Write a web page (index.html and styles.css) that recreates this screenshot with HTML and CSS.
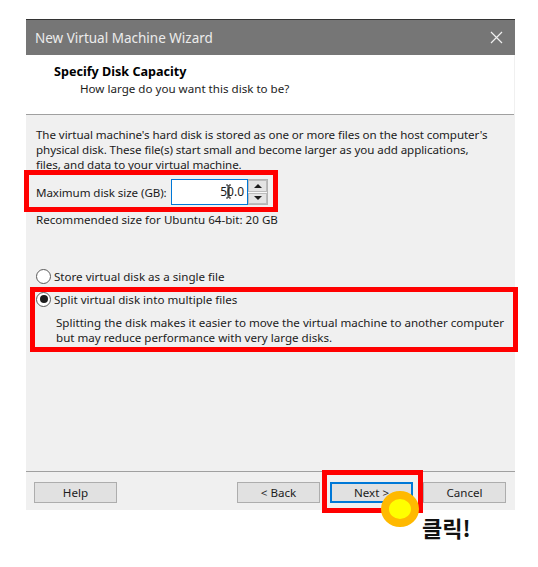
FILE: index.html
```html
<!DOCTYPE html>
<html lang="en">
<head>
    <meta charset="UTF-8">
    <title>New Virtual Machine Wizard</title>
    <link rel="stylesheet" href="styles.css">
</head>
<body>
    <div class="window">
        <div class="titlebar">
            <span>New Virtual Machine Wizard</span>
            <svg class="close" width="13" height="13" viewBox="0 0 13 13">
                <path d="M1 1L12 12M12 1L1 12" stroke="#f0f0f0" stroke-width="1.2" fill="none"/>
            </svg>
        </div>
        <div class="header">
            <h1>Specify Disk Capacity</h1>
            <p>How large do you want this disk to be?</p>
        </div>
        <div class="content">
            <p class="intro">The virtual machine's hard disk is stored as one or more files on the host computer's<br>physical disk. These file(s) start small and become larger as you add applications,<br>files, and data to your virtual machine.</p>
            <div class="size-row">
                <label>Maximum disk size (GB):</label>
                <div class="spinner">
                    <div class="size-input">50.0</div>
                    <div class="arrows">
                        <div class="arrow"><i class="up"></i></div>
                        <div class="arrow"><i class="down"></i></div>
                    </div>
                </div>
            </div>
            <p class="recommend">Recommended size for Ubuntu 64-bit: 20 GB</p>
            <div class="radio-row first"><span class="radio"></span>Store virtual disk as a single file</div>
            <div class="radio-row"><span class="radio checked"></span>Split virtual disk into multiple files</div>
            <p class="note">Splitting the disk makes it easier to move the virtual machine to another computer<br>but may reduce performance with very large disks.</p>
        </div>
        <div class="footer">
            <button class="help">Help</button>
            <button class="back">&lt; Back</button>
            <button class="next">Next &gt;</button>
            <button class="cancel">Cancel</button>
        </div>
    </div>

    <!-- annotations drawn over the screenshot -->
    <div class="mark mark-size"></div>
    <div class="mark mark-split"></div>
    <div class="mark mark-next"></div>
    <svg class="ibeam" width="7" height="15" viewBox="0 0 7 15">
        <path d="M1 1H3V14H1M6 1H4V14H6" stroke="#222" stroke-width="1" fill="none"/>
    </svg>
    <div class="click-dot"></div>
    <div class="click-label">클릭!</div>
</body>
</html>
```

FILE: styles.css
```css
body {
    font-family: "Noto Sans", "Noto Sans CJK KR", sans-serif;
    font-size: 11.6px;
    color: #1c1c1c;
    background-color: #ffffff;
    margin: 0;
    padding: 19px 0 0 26px;
    height: 567px;
    box-sizing: border-box;
    overflow: hidden;
}
.window {
    width: 489px;
    height: 491px;
    display: flex;
    flex-direction: column;
    background-color: #f0f0f0;
}
.titlebar {
    height: 36px;
    background-color: #767676;
    color: #ececec;
    font-size: 13.5px;
    padding: 0 12px 0 9px;
    display: flex;
    align-items: center;
    justify-content: space-between;
    flex-shrink: 0;
    border-top: 1px solid #333333;
    box-sizing: border-box;
}
.header {
    height: 59px;
    background-color: #ffffff;
    border-bottom: 1px solid #a0a0a0;
    padding-left: 28px;
    flex-shrink: 0;
    margin-right: 1px;
}
.header h1 {
    font-size: 12.6px;
    font-weight: 700;
    color: #000000;
    margin: 0;
    padding-top: 8px;
    line-height: 17px;
}
.header p {
    margin: 0 0 0 26px;
    line-height: 17px;
}
.content {
    flex: 1;
    padding: 12px 10px 0 10px;
}
.content p {
    margin: 0;
}
.intro {
    line-height: 15px;
    height: 45px;
    letter-spacing: -0.08px;
    white-space: nowrap;
}
.size-row {
    display: flex;
    align-items: center;
    margin-top: 7px;
    height: 26px;
}
.size-row label {
    width: 135px;
    white-space: nowrap;
    letter-spacing: -0.08px;
}
.spinner {
    display: flex;
    height: 26px;
}
.size-input {
    width: 72px;
    background-color: #ffffff;
    border: 1px solid #0078d7;
    text-align: right;
    padding-right: 3px;
    line-height: 24px;
    font-size: 12px;
}
.arrows {
    width: 20px;
    display: flex;
    flex-direction: column;
    border: 1px solid #b4b4b4;
    border-left: none;
    box-sizing: border-box;
    gap: 1px;
    background-color: #f8f8f8;
}
.arrow {
    flex: 1;
    background-color: #e4e4e4;
    border: 1px solid #bcbcbc;
    display: flex;
    align-items: center;
    justify-content: center;
}
.arrow i {
    width: 0;
    height: 0;
    border-left: 4px solid transparent;
    border-right: 4px solid transparent;
}
.arrow .up {
    border-bottom: 4px solid #1c1c1c;
}
.arrow .down {
    border-top: 4px solid #1c1c1c;
}
.content .recommend {
    margin-top: 7px;
    line-height: 16px;
}
.radio-row {
    display: flex;
    align-items: center;
    height: 18px;
    margin-top: 5px;
}
.radio-row.first {
    margin-top: 39px;
}
.radio {
    width: 13px;
    height: 13px;
    border: 1px solid #5a5a5a;
    border-radius: 50%;
    background-color: #ffffff;
    margin-right: 3px;
    position: relative;
    flex-shrink: 0;
}
.radio.checked::after {
    content: "";
    position: absolute;
    top: 2.5px;
    left: 2.5px;
    width: 8px;
    height: 8px;
    border-radius: 50%;
    background-color: #1c1c1c;
}
.content .note {
    line-height: 15px;
    margin: 7px 0 0 20px;
    white-space: nowrap;
}
.footer {
    height: 39px;
    border-top: 1px solid #a0a0a0;
    padding: 10px 8px 0 8px;
    box-sizing: border-box;
    display: flex;
    flex-shrink: 0;
}
button {
    height: 21px;
    background-color: #e1e1e1;
    border: 1px solid #adadad;
    font-family: inherit;
    font-size: 11.6px;
    color: #1c1c1c;
    padding: 0 0 1px 0;
}
.help {
    width: 83px;
}
.back {
    width: 83px;
    margin-left: 120px;
}
.next {
    width: 83px;
    margin-left: 10px;
    border: 2px solid #0078d7;
}
.cancel {
    width: 83px;
    margin-left: 10px;
}
.mark {
    position: absolute;
    border: 5px solid #ff0000;
    box-sizing: border-box;
}
.mark-size {
    left: 24px;
    top: 170px;
    width: 254px;
    height: 42px;
}
.mark-split {
    left: 30px;
    top: 287px;
    width: 488px;
    height: 65px;
}
.mark-next {
    left: 322px;
    top: 470px;
    width: 101px;
    height: 43px;
}
.ibeam {
    position: absolute;
    left: 225px;
    top: 184px;
}
.click-dot {
    position: absolute;
    left: 381px;
    top: 491px;
    width: 22px;
    height: 20px;
    background-color: #ffff00;
    border: 8px solid #ffb900;
    border-radius: 50%;
}
.click-label {
    position: absolute;
    left: 422px;
    top: 512px;
    font-family: "Noto Sans CJK KR", sans-serif;
    font-size: 22px;
    font-weight: 700;
    line-height: 30px;
    color: #111111;
}
```
